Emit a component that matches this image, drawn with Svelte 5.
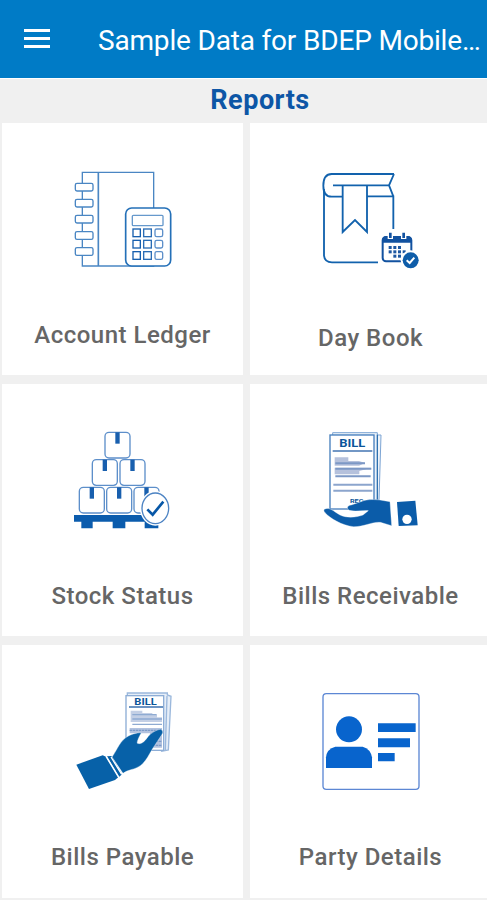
<script>
    let title = "Sample Data for BDEP Mobile…";
    let reports = [
        { name: "Account Ledger", icon: "ledger", box: "-6 -2 360 360" },
        { name: "Day Book", icon: "daybook", box: "3 -2 360 360", low: true },
        { name: "Stock Status", icon: "stock", box: "-6 1 360 360" },
        { name: "Bills Receivable", icon: "receivable", box: "3 1 360 360" },
        { name: "Bills Payable", icon: "payable", box: "-6 3 360 360" },
        { name: "Party Details", icon: "party", box: "3 3 360 360" },
    ];
    let rings = [71, 119, 167, 216, 264];
    let keys = [208, 242, 276];
    let boxes = [[120, 38], [82, 120], [165, 120], [43, 203], [125, 203], [207, 203]];
    let days = [[250, 259], [264, 259], [236, 259], [236, 272], [250, 272], [264, 272], [278, 272], [250, 285], [264, 285]];
</script>

<div class="screen">
    <header>
        <button class="menu" aria-label="Menu">
            <span></span>
            <span></span>
            <span></span>
        </button>
        <h1>{title}</h1>
    </header>
    <h2>Reports</h2>
    <main>
        {#each reports as report}
            <div class="card">
                <svg class="icon" viewBox={report.box}>
                    {#if report.icon == "ledger"}
                        <g fill="#fff" stroke="#4a86c3" stroke-width="4">
                            <path d="M52 38H266V319H52Z" />
                            <path d="M100 38V319" stroke-width="5" />
                            {#each rings as y}
                                <rect x="31" {y} width="53" height="23" rx="5" />
                            {/each}
                            <rect x="182" y="145" width="135" height="174" rx="18" stroke="#2470b8" stroke-width="5" />
                            <rect x="202" y="167" width="92" height="31" rx="3" stroke="#6699cc" />
                            {#each keys as y}
                                <rect x="204" {y} width="22" height="23" stroke="#175fae" />
                                <rect x="236" {y} width="23" height="23" stroke="#2b6db5" />
                                <rect x="270" {y} width="23" height="23" rx="5" stroke="#5e90ca" />
                            {/each}
                        </g>
                    {:else if report.icon == "daybook"}
                        <g fill="none" stroke="#1262ad" stroke-width="5.5">
                            <path d="M252 43H65Q40 43 40 78Q40 111 65 111H96M171 110H250V208M252 43L237 77L250 110M69 77H237" />
                            <path d="M42 88V288Q44 308 66 308H204" />
                            <path d="M98 77V217L135 181L171 217V77" />
                        </g>
                        <rect x="218" y="232" width="86" height="73" rx="10" fill="#fff" stroke="#1252a0" stroke-width="6" />
                        <path d="M216 249V242Q216 230 229 230H293Q306 230 306 242V249Z" fill="#1252a0" />
                        <path d="M241 217V238M281 217V238" stroke="#fff" stroke-width="16" />
                        <path d="M241 219V235M281 219V235" stroke="#1252a0" stroke-width="8" />
                        {#each days as [x, y]}
                            <rect {x} {y} width="9" height="9" fill="#1e58a2" />
                        {/each}
                        <circle cx="302" cy="302" r="30" fill="#fff" />
                        <circle cx="302" cy="302" r="24" fill="#0e5da9" />
                        <path d="M290 302L299 310L313 294" fill="none" stroke="#fff" stroke-width="6" />
                    {:else if report.icon == "stock"}
                        {#each boxes as [x, y]}
                            <rect {x} {y} width="75" height="77" rx="12" fill="#fff" stroke="#5d8fca" stroke-width="4" />
                            <rect x={x + 31} {y} width="13" height="34" fill="#185fae" />
                        {/each}
                        <path d="M27 286H280V326H239V306H181V326H143V306H83V326H49V306H27Z" fill="#0b5cad" />
                        <ellipse cx="271" cy="266" rx="46" ry="52" fill="#fff" />
                        <ellipse cx="271" cy="266" rx="40" ry="46" fill="#fff" stroke="#4c83c3" stroke-width="4" />
                        <path d="M247 269L263 285L295 246" fill="none" stroke="#0757a7" stroke-width="8" />
                    {:else if report.icon == "receivable"}
                        <path d="M68 47V39H202V46H213L207 241H190V47Z" fill="#edf3fa" stroke="#7da5d4" stroke-width="3" />
                        <path d="M202 45V240" stroke="#2e71b0" stroke-width="4" />
                        <rect x="60" y="46" width="132" height="222" fill="#fff" stroke="#477fbd" stroke-width="4" />
                        <text x="88" y="83" class="bill" font-size="33" textLength="78" lengthAdjust="spacingAndGlyphs">BILL</text>
                        <path d="M68 94H187" stroke="#4375b2" stroke-width="5" />
                        <path d="M74 113H115V124H147L165 130L147 138H74ZM74 144H184L148 154V164H74Z" fill="#b5c1dc" />
                        <path d="M76 131H165M76 147H184M76 170H182" stroke="#7c98c5" stroke-width="6" />
                        <path d="M70 195H187M70 213H187" stroke="#8ca5cd" stroke-width="6" />
                        <text x="120" y="250" class="bill" font-size="18" textLength="40" lengthAdjust="spacingAndGlyphs">REC</text>
                        <path d="M43 269C59 260 73 277 90 286C112 297 143 292 159 286L175 273C156 272 135 277 118 272C108 265 112 257 124 256L153 246C174 237 194 240 210 241L240 246L245 318L211 308C185 306 161 322 130 321C97 318 59 295 46 280Q39 273 43 269Z" fill="#0b5ca9" stroke="#fff" stroke-width="1" />
                        <path d="M261 247L316 243L323 317L266 319Z" fill="#0b5ca9" />
                        <circle cx="291" cy="299" r="14" fill="#fff" />
                    {:else if report.icon == "payable"}
                        <path d="M187 48V39H307V45L318 49L310 210L290 214Z" fill="#e6eef8" stroke="#9bb8dc" stroke-width="4" />
                        <path d="M306 48L301 210" stroke="#9bb8dc" stroke-width="4" />
                        <rect x="183" y="47" width="113" height="164" fill="#fff" stroke="#8dadd6" stroke-width="4" />
                        <text x="208" y="75" class="bill" font-size="26" textLength="67" lengthAdjust="spacingAndGlyphs">BILL</text>
                        <path d="M192 81H294" stroke="#3b71af" stroke-width="4" />
                        <path d="M197 92H232V99H262V105H276V112H291V126H197Z" fill="#c3cfe5" />
                        <path d="M202 104H275M202 117H291M202 133H291" stroke="#8fabd2" stroke-width="4" />
                        <path d="M194 144H291V203H255V160H194Z" fill="#b2c2df" />
                        <path d="M194 151H291M264 184H289M264 196H289" stroke="#7d9bc9" stroke-width="4" stroke-dasharray="7 2" />
                        <path d="M141 231C154 214 161 191 180 175C194 163 216 158 229 158C222 170 215 185 217 190C231 195 241 181 249 170C260 157 279 148 287 148Q297 152 291 163L262 207C252 223 243 245 226 257C211 269 188 268 174 280Z" fill="#0761a8" stroke="#fff" stroke-width="1" />
                        <path d="M34 254L113 226L123 230L160 292L150 300L72 327Z" fill="#0761a8" />
                        <path d="M126 229L139 228L171 283L163 290Z" fill="#0761a8" />
                        <path d="M123 229L162 294M138 231L170 283" stroke="#fff" stroke-width="4" />
                    {:else}
                        <rect x="39" y="41" width="288" height="287" rx="10" fill="#fff" stroke="#5c87d4" stroke-width="4" />
                        <g fill="#0864cd">
                            <circle cx="117" cy="148" r="39" />
                            <path d="M48 264V232Q50 207 76 200H158Q182 207 186 232V264Z" />
                            <path d="M204 130H317V156H204ZM204 175H300V202H204ZM204 219H254V244H204Z" />
                        </g>
                    {/if}
                </svg>
                <p class:low={report.low}>{report.name}</p>
            </div>
        {/each}
    </main>
</div>

<style>
    :global(body) {
        background: #f0f0f0;
    }
    .screen {
        width: 100%;
        height: 900px;
        overflow: hidden;
        background: #f0f0f0;
        font-family: Roboto, sans-serif;
    }
    header {
        display: flex;
        align-items: center;
        box-sizing: border-box;
        height: 79px;
        padding: 4px 0 0 24px;
        background: #007bc6;
        border-bottom: 1px solid #fff;
    }
    .menu {
        display: flex;
        flex-direction: column;
        gap: 5px;
        width: 26px;
        margin: 0 48px 5px 0;
        padding: 0;
        border: none;
        background: none;
        cursor: pointer;
    }
    .menu span {
        height: 3px;
        background: #fff;
    }
    h1 {
        margin: 0;
        color: #fff;
        font-size: 28px;
        font-weight: 400;
        line-height: 36px;
        letter-spacing: -0.18px;
        white-space: nowrap;
    }
    h2 {
        height: 44px;
        margin: 0;
        padding-left: 33px;
        color: #0d56a6;
        font-size: 27px;
        font-weight: 700;
        line-height: 43px;
        letter-spacing: 0.5px;
        text-align: center;
    }
    main {
        display: grid;
        grid-template-columns: 241px 241px;
        grid-template-rows: 252px 252px 253px;
        gap: 9px 7px;
        padding-left: 2px;
    }
    .card {
        display: flex;
        flex-direction: column;
        align-items: center;
        background: #fff;
    }
    .icon {
        width: 120px;
        height: 120px;
        margin: 36px 0 41px;
    }
    .bill {
        fill: #0b5599;
        font-family: Roboto, sans-serif;
        font-weight: 700;
    }
    p {
        margin: 0;
        color: #666;
        font-size: 24px;
        font-weight: 500;
        line-height: 30px;
        letter-spacing: 0.5px;
    }
    p.low {
        padding-top: 3px;
    }
</style>
